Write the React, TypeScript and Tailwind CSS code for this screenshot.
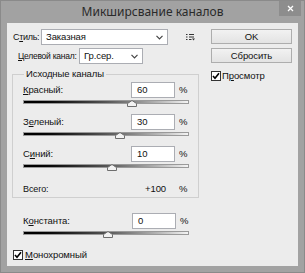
import React from "react";

const font = { fontFamily: '"Liberation Sans", Arial, sans-serif' };
const tfont = { fontFamily: '"Noto Sans", "Open Sans", sans-serif' };

const txt = "text-[9.5px] leading-none text-[#111] whitespace-nowrap tracking-[-0.1px]";

function Chevron() {
  return (
    <svg width="7" height="5" viewBox="0 0 7 5" className="shrink-0">
      <path d="M0.5 0.8 L3.5 3.8 L6.5 0.8" fill="none" stroke="#444" strokeWidth="1.2" />
    </svg>
  );
}

function Select({ text, w }: { text: string; w: string }) {
  return (
    <div className={`${w} h-[16px] bg-white border border-[#abadb3] flex items-center justify-between pl-[4px] pr-[4px] shrink-0`}>
      <span className={txt}>{text}</span>
      <Chevron />
    </div>
  );
}

function Check() {
  return (
    <div className="w-[10px] h-[10px] bg-white border border-[#333] flex items-center justify-center shrink-0">
      <svg width="8" height="8" viewBox="0 0 8 8">
        <path d="M1 4 L3 6.3 L7 1.2" fill="none" stroke="#000" strokeWidth="1.6" />
      </svg>
    </div>
  );
}

function Field({ label, u, value }: { label: string; u: number; value: string }) {
  return (
    <div className="flex items-center h-[16px]">
      <span className={`flex-1 ${txt}`}>
        {label.slice(0, u)}
        <span className="underline">{label[u]}</span>
        {label.slice(u + 1)}
      </span>
      <div className={`w-[44px] h-[16px] bg-white border border-[#abadb3] flex items-center pl-[5px] ${txt}`}>
        {value}
      </div>
      <span className={`ml-[4px] w-[10px] ${txt}`}>%</span>
    </div>
  );
}

function Slider({ pos }: { pos: number }) {
  return (
    <div className="relative h-[9px] w-[166px] mt-[1px]">
      <div className="absolute left-0 right-0 top-[1px] h-[4px] border border-[#9a9a9a] bg-gradient-to-r from-[#000] via-[#555] to-[#f4f4f4]" />
      <svg
        width="10"
        height="7"
        viewBox="0 0 10 7"
        className="absolute top-[1px]"
        style={{ left: `${pos - 5}px` }}
      >
        <path d="M0.5 6.5 L0.5 3.5 L5 0.5 L9.5 3.5 L9.5 6.5 Z" fill="#f2f2f2" stroke="#6e6e6e" strokeWidth="1" />
      </svg>
    </div>
  );
}

export default function App() {
  return (
    <div
      className="w-[305px] h-[273px] bg-[#a2a2a2] border border-[#8a8a8a] flex flex-col"
      style={font}
    >
      <div className="h-[22px] relative flex items-center justify-center">
        <span className="text-[12px] text-[#2a2a2a] leading-none" style={tfont}>Микширсвание каналов</span>
        <div className="absolute right-[3px] top-0 w-[22px] h-[15px] bg-[#8d8d8d] flex items-center justify-center">
          <svg width="7" height="7" viewBox="0 0 7 7">
            <path d="M1 1 L6 6 M6 1 L1 6" stroke="#fff" strokeWidth="1.3" />
          </svg>
        </div>
      </div>
      <div className="mx-[6px] mb-[6px] flex-1 bg-[#ececec] flex pl-[5px] pt-[6px]">
        <div className="w-[187px] flex flex-col">
          <div className="flex items-center h-[16px]">
            <span className={`w-[29px] pl-[1px] ${txt} !text-[9px] !tracking-[-0.3px]`}>
              С<span className="underline">т</span>иль:
            </span>
            <Select text="Заказная" w="w-[127px]" />
            <svg width="9" height="8" viewBox="0 0 9 8" className="ml-[18px]">
              <path d="M0 1.5 H1.5 M3 1.5 H8 M0 4 H1.5 M3 4 H8 M0 6.5 H1.5 M3 6.5 H5.5" stroke="#333" strokeWidth="1" />
              <path d="M6 5.5 L9 5.5 L7.5 7.5 Z" fill="#333" />
            </svg>
          </div>
          <div className="flex items-center h-[16px] mt-[3px] pl-[6px]">
            <span className={`w-[61px] ${txt} !text-[8.5px] !tracking-[-0.25px]`}>
              <span className="underline">Ц</span>елевой канал:
            </span>
            <Select text="Гр.сер." w="w-[64px]" />
          </div>
          <fieldset className="mt-[3px] h-[131px] border border-[#cfcfcf] pl-[10px] pr-[9px]">
            <legend className={`ml-[1px] px-[2px] !leading-[14px] ${txt}`}>Исходные каналы</legend>
            <div className="flex flex-col mt-[1px]">
              <Field label="Красный:" u={0} value="60" />
              <Slider pos={109} />
              <div className="h-[6px]" />
              <Field label="Зеленый:" u={1} value="30" />
              <Slider pos={97} />
              <div className="h-[6px]" />
              <Field label="Синий:" u={1} value="10" />
              <Slider pos={89} />
              <div className="flex items-center h-[16px] mt-[9px]">
                <span className={`flex-1 ${txt} !text-[9px]`}>Всего:</span>
                <span className={txt}>+100</span>
                <span className={`ml-[13px] w-[10px] ${txt}`}>%</span>
              </div>
            </div>
          </fieldset>
          <div className="pl-[11px] pr-[9px] mt-[15px]">
            <Field label="Константа:" u={1} value="0" />
            <Slider pos={85} />
          </div>
          <div className="flex items-center mt-[11px] pl-[1px] gap-[2px]">
            <Check />
            <span className={txt}>
              <span className="underline">М</span>онохромный
            </span>
          </div>
        </div>
        <div className="ml-[12px] w-[81px] flex flex-col">
          <div className={`h-[15px] border border-[#adadad] bg-gradient-to-b from-[#f2f2f2] to-[#e3e3e3] flex items-center justify-center ${txt}`}>
            OK
          </div>
          <div className={`mt-[4px] h-[15px] border border-[#adadad] bg-gradient-to-b from-[#f2f2f2] to-[#e3e3e3] flex items-center justify-center ${txt}`}>
            Сбросить
          </div>
          <div className="flex items-center mt-[8px] gap-[1px]">
            <Check />
            <span className={txt}>
              П<span className="underline">р</span>осмотр
            </span>
          </div>
        </div>
      </div>
    </div>
  );
}
